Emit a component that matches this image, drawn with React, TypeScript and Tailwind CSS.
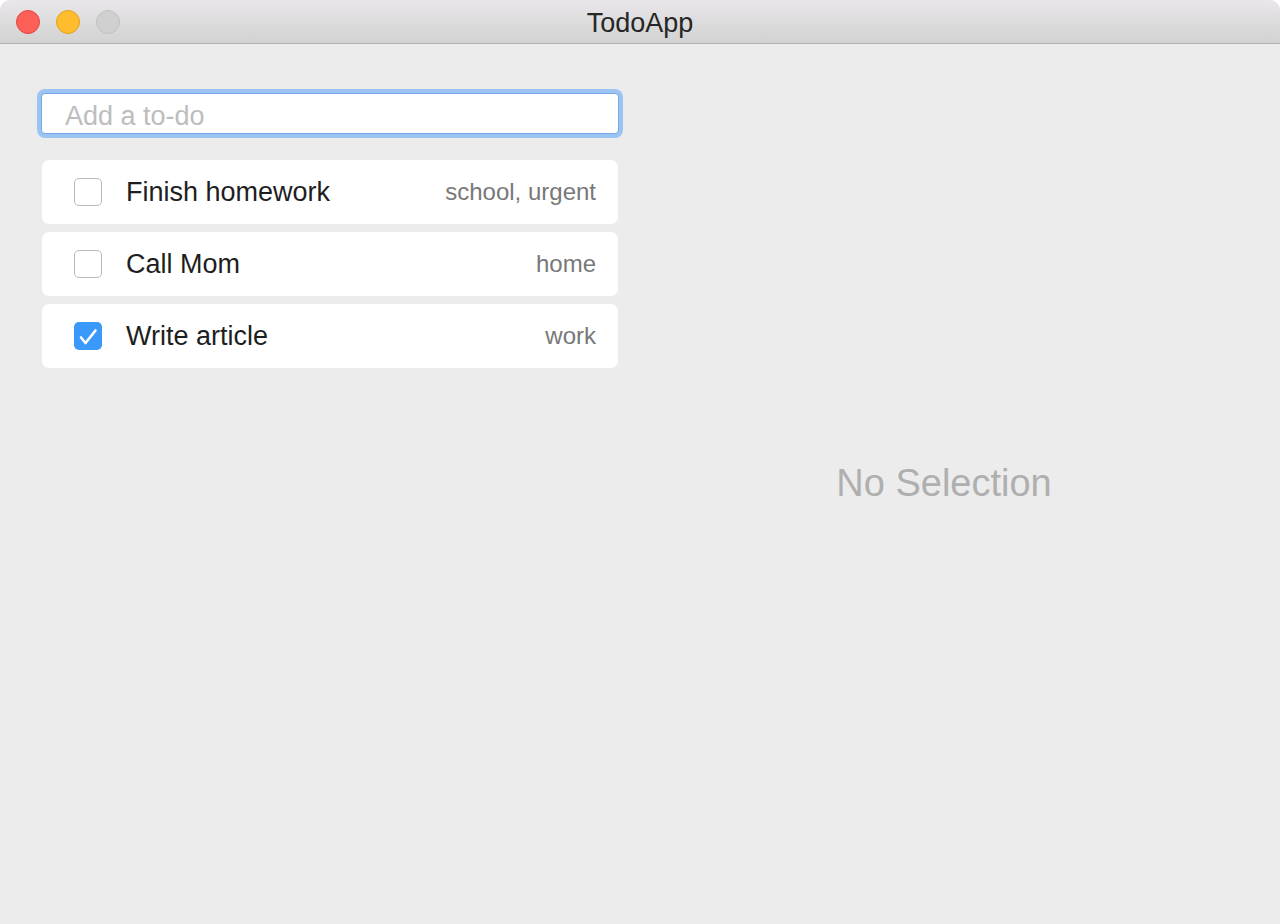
import React from 'react'

type Todo = { title: string; tags: string; done: boolean }

const todos: Todo[] = [
  { title: 'Finish homework', tags: 'school, urgent', done: false },
  { title: 'Call Mom', tags: 'home', done: false },
  { title: 'Write article', tags: 'work', done: true },
]

const font = { fontFamily: '"Helvetica Neue", "Liberation Sans", Arial, sans-serif' }

const Checkbox = ({ checked }: { checked: boolean }) =>
  checked ? (
    <span className="flex h-[28px] w-[28px] items-center justify-center rounded-[5px] bg-[#3b99fc]">
      <svg width="28" height="28" viewBox="0 0 28 28" fill="none">
        <path d="M7 15.5 L11.5 21 L21.5 8.5" stroke="white" strokeWidth="2.6" strokeLinecap="round" strokeLinejoin="round" />
      </svg>
    </span>
  ) : (
    <span className="h-[28px] w-[28px] rounded-[5px] border border-[#b8b8b8] bg-white" />
  )

const TodoRow = ({ todo }: { todo: Todo }) => (
  <div className="flex h-[64px] items-center rounded-[7px] bg-white pl-[32px] pr-[22px]">
    <Checkbox checked={todo.done} />
    <span className="ml-[24px] flex-1 text-[27px] text-[#1e1e1e]">{todo.title}</span>
    <span className="text-[24px] text-[#787878]">{todo.tags}</span>
  </div>
)

export default function App() {
  return (
    <div className="flex h-[924px] w-[1280px] flex-col overflow-hidden rounded-t-[10px] bg-[#ececec]" style={font}>
      <div className="relative flex h-[44px] shrink-0 items-center justify-center border-b border-[#b1b1b1] bg-gradient-to-b from-[#e9e7e9] to-[#d2d2d2]">
        <div className="absolute left-[16px] top-[10px] flex gap-[16px]">
          <span className="h-[24px] w-[24px] rounded-full border border-[#e2463f] bg-[#fe5f57]" />
          <span className="h-[24px] w-[24px] rounded-full border border-[#e1a116] bg-[#febc2e]" />
          <span className="h-[24px] w-[24px] rounded-full border border-[#c0c0c0] bg-[#d0d0d0]" />
        </div>
        <span className="pt-[3px] text-[27px] text-[#262626]">TodoApp</span>
      </div>
      <div className="flex flex-1">
        <div className="flex w-[640px] flex-col pl-[42px] pr-[22px] pt-[49px]">
          <div className="-mx-[1px] rounded-[4px] border border-[#76a7e6] bg-white shadow-[0_0_0_4px_#9cc4f2]">
            <input
              readOnly
              placeholder="Add a to-do"
              className="h-[39px] w-full bg-transparent px-[23px] pt-[5px] text-[27px] text-[#222] outline-none placeholder:text-[#bdbdbd]"
            />
          </div>
          <div className="mt-[26px] flex flex-col gap-[8px]">
            {todos.map((t) => (
              <TodoRow key={t.title} todo={t} />
            ))}
          </div>
        </div>
        <div className="flex flex-1 items-center justify-center pr-[32px] pb-[2px]">
          <span className="text-[38px] text-[#afafaf]">No Selection</span>
        </div>
      </div>
    </div>
  )
}
